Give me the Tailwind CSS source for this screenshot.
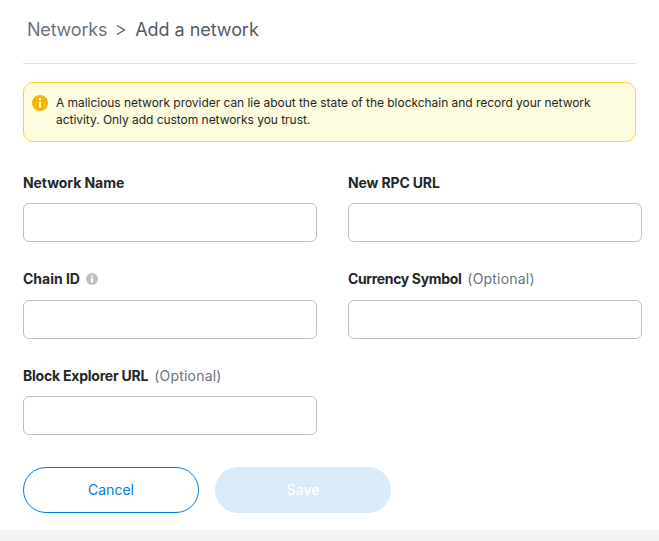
<!DOCTYPE html>
<html lang="en">
<head>
  <meta charset="UTF-8">
  <title>Add a network</title>
  <script src="https://cdn.jsdelivr.net/npm/@tailwindcss/browser@4"></script>
</head>
<body class="bg-white font-['Inter',sans-serif] text-[#24272a] w-[659px] h-[541px] overflow-hidden flex flex-col">
  <div class="h-[530px] pl-[23px]">
    <div class="w-[613px] h-[64px] border-b border-[#e0e0e0] pl-1 pt-[16px] pb-[20px] flex items-center gap-[9px] text-[18px] leading-[24px] text-[#6a737d] tracking-[-0.2px]">
      <span>Networks</span>
      <svg class="w-[10px] h-[12px]" viewBox="0 0 10 12" fill="none" stroke="#535a61" stroke-width="1.3"><path d="M1 1.5 8.5 6 1 10.5"/></svg>
      <span class="text-[#535a61] tracking-[-0.05px]">Add a network</span>
    </div>

    <div class="mt-[18px] w-[613px] h-[60px] bg-[#fefcde] border border-[#ffd33d] rounded-[10px] flex pl-2 pt-[11px] gap-2">
      <svg class="w-4 h-4 mt-[1px] shrink-0" viewBox="0 0 16 16"><circle cx="8" cy="8" r="8" fill="#f8b400"/><rect x="7" y="3" width="2" height="2" fill="#fff"/><rect x="7" y="6.5" width="2" height="6" fill="#fff"/></svg>
      <p class="text-[12px] leading-[17px] w-[550px] tracking-[-0.04px]">A malicious network provider can lie about the state of the blockchain and record your network activity. Only add custom networks you trust.</p>
    </div>

    <div class="mt-[31px] grid grid-cols-[294px_294px] gap-x-[31px] gap-y-[27px]">
      <div>
        <label class="block h-[20px] text-[14px] leading-[20px] font-bold tracking-[-0.07px]">Network Name</label>
        <input type="text" class="mt-[10px] block w-full h-[39px] border border-[#bbc0c5] rounded-md bg-white">
      </div>
      <div>
        <label class="block h-[20px] text-[14px] leading-[20px] font-bold tracking-[-0.15px]">New RPC URL</label>
        <input type="text" class="mt-[10px] block w-full h-[39px] border border-[#bbc0c5] rounded-md bg-white">
      </div>
      <div>
        <label class="h-[20px] text-[14px] leading-[20px] font-bold tracking-[-0.02px] flex items-center gap-[6px]">Chain ID
          <svg class="w-3 h-3" viewBox="0 0 12 12"><circle cx="6" cy="6" r="6" fill="#bbc0c5"/><rect x="5" y="2.5" width="2" height="1.6" fill="#fff"/><rect x="5" y="5" width="2" height="4.5" fill="#fff"/></svg>
        </label>
        <input type="text" class="mt-[11px] block w-full h-[39px] border border-[#bbc0c5] rounded-md bg-white">
      </div>
      <div>
        <label class="h-[20px] text-[14px] leading-[20px] font-bold tracking-[-0.35px] flex items-center gap-[6px]">Currency Symbol <span class="font-normal text-[#6a737d] tracking-[0.2px]">(Optional)</span></label>
        <input type="text" class="mt-[11px] block w-full h-[39px] border border-[#bbc0c5] rounded-md bg-white">
      </div>
      <div>
        <label class="h-[20px] text-[14px] leading-[20px] font-bold tracking-[-0.22px] flex items-center gap-[6px]">Block Explorer URL <span class="font-normal text-[#6a737d] tracking-[0.2px]">(Optional)</span></label>
        <input type="text" class="mt-[10px] block w-full h-[39px] border border-[#bbc0c5] rounded-md bg-white">
      </div>
    </div>

    <div class="mt-[32px] flex gap-4">
      <button class="w-[176px] h-[46px] rounded-[23px] border border-[#037dd6] bg-white text-[#037dd6] text-[14px] pb-[1px]">Cancel</button>
      <button class="w-[176px] h-[46px] rounded-[23px] bg-[#d9eaf9] text-white text-[14px] font-medium pb-[1px]">Save</button>
    </div>
  </div>
  <div class="h-[11px] bg-[#f3f3f3]"></div>
</body>
</html>
